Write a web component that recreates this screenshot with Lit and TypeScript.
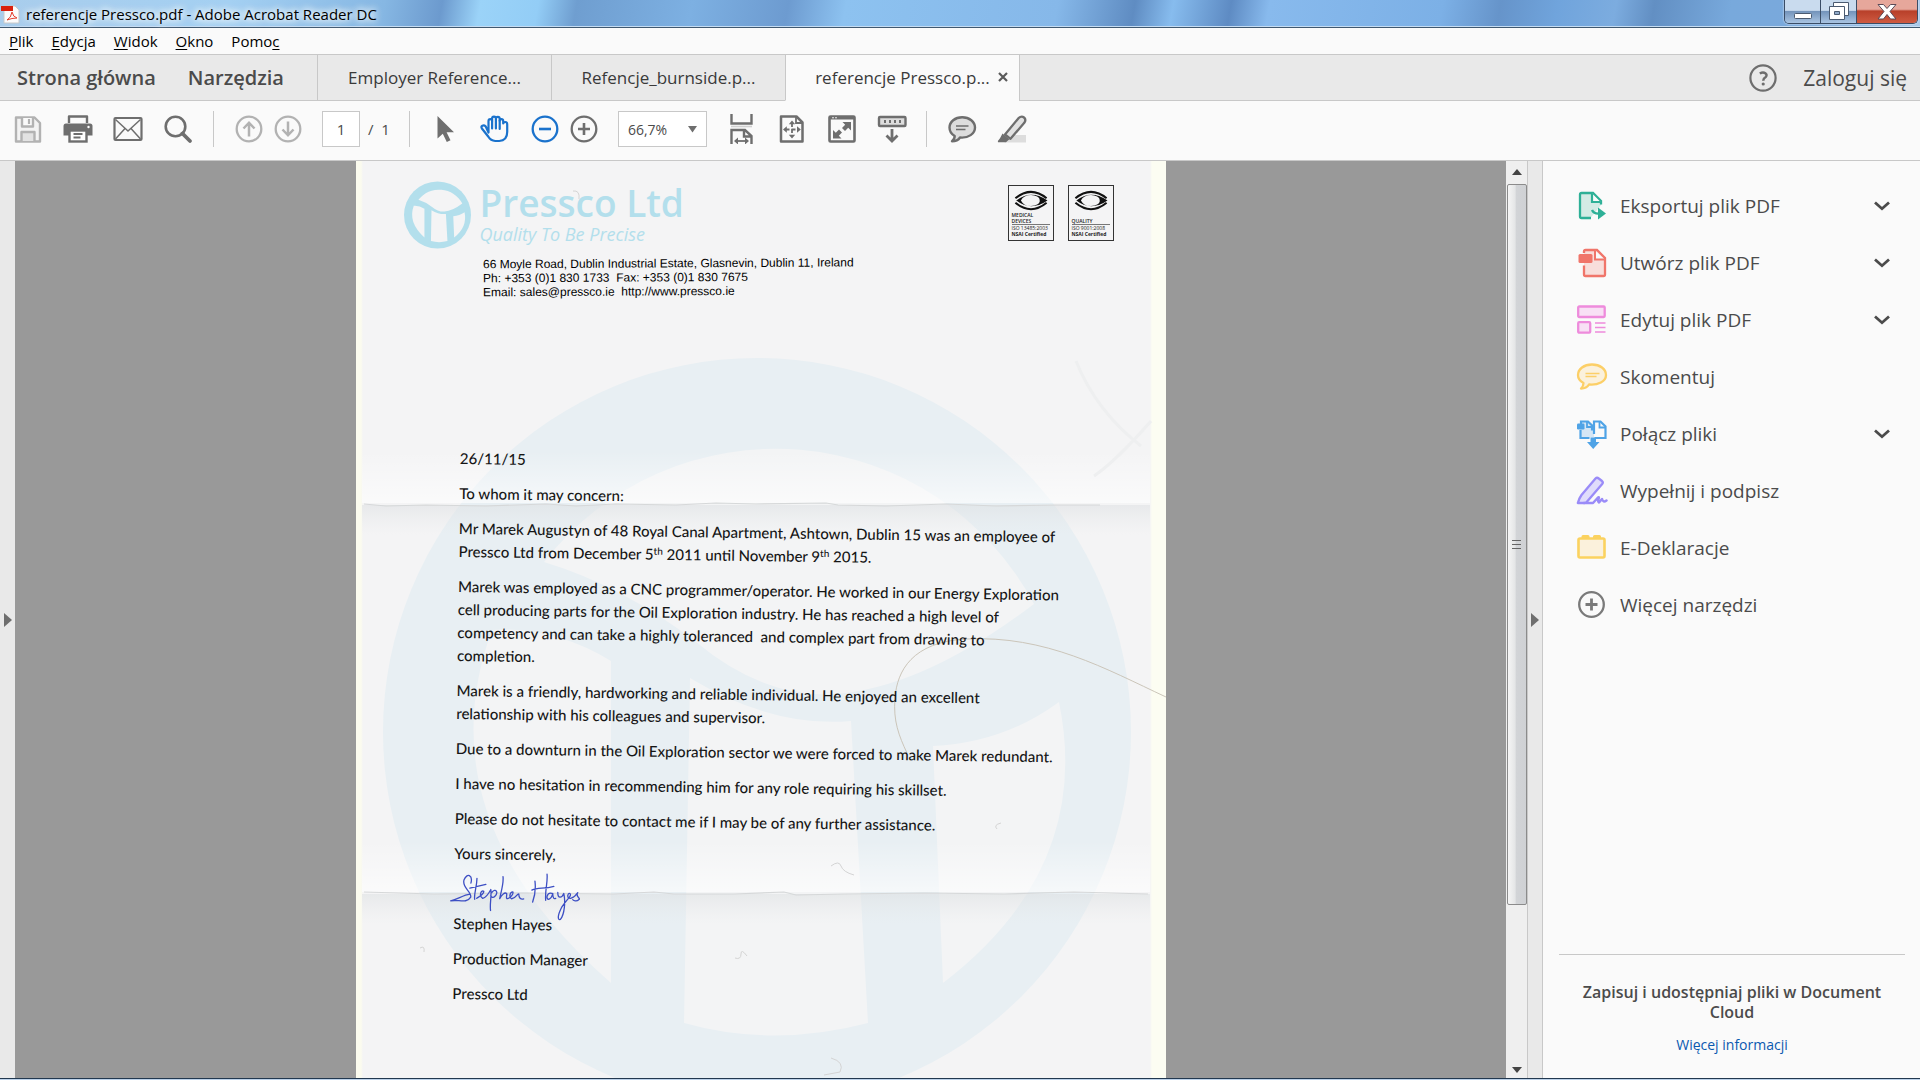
import { LitElement, html, css, svg, nothing } from "lit";
import { customElement } from "lit/decorators.js";

const reset = css`
  *, *::before, *::after { box-sizing: border-box; }
  button { font: inherit; color: inherit; background: none; border: 0; padding: 0; margin: 0; cursor: pointer; }
  a { color: inherit; text-decoration: none; }
  p, h1, h2, ul { margin: 0; padding: 0; }
  ul { list-style: none; }
  svg { display: block; }
`;

const UI_FONT = css`"Open Sans", "Noto Sans", sans-serif`;

/* ---------- toolbar icons, 30 x 30 ---------- */
const icon = (body: unknown) => html`<svg width="30" height="30" viewBox="0 0 30 30" fill="none" aria-hidden="true">${body}</svg>`;

const G = "#6e6e6e";
const L = "#b2b2b2";
const icons = {
  save: icon(svg`<g stroke=${L} stroke-width="2.4" stroke-linejoin="round"><path d="M3 3.5h18.5l5.500 5.500v18.500h-24z" fill="#f3f3f3"/><path d="M9 4v8.500h11v-8.500" fill="#fafafa"/><path d="M8.500 27v-9h13v9" fill="#e2e2e2"/></g><path d="M16 5v5" stroke=${L} stroke-width="2.200"/>`),
  print: icon(svg`<path d="M6 9v-6.500h18v6.500" fill="#fafafa" stroke=${G} stroke-width="2.400" stroke-linejoin="round"/><path d="M3 9.500h24q2.500 0 2.500 2.500v9.500h-29v-9.500q0-2.500 2.500-2.500z" fill=${G}/><rect x="6.500" y="16.500" width="17" height="11" fill="#fff" stroke=${G} stroke-width="2.400"/><path d="M10.500 20h9M10.500 23.500h7" stroke=${G} stroke-width="1.800"/><circle cx="25.500" cy="13" r="1.200" fill="#fff"/>`),
  mail: icon(svg`<rect x="1.500" y="4" width="27" height="22" rx="1" fill="#fafafa" stroke=${G} stroke-width="2.200"/><path d="M2.500 5.500l12.500 11.500 12.500-11.500M2.500 25l9.500-10.500M27.500 25l-9.500-10.500" stroke=${G} stroke-width="1.500"/>`),
  find: icon(svg`<circle cx="12.500" cy="12.500" r="9.800" stroke=${G} stroke-width="2.600"/><path d="M19.500 19.500l7.500 7.500" stroke=${G} stroke-width="3.800" stroke-linecap="round"/>`),
  up: icon(svg`<circle cx="15" cy="15" r="12.300" stroke=${L} stroke-width="2.300"/><path d="M15 22.500v-13M9.500 14.500l5.500-5.800 5.500 5.800" stroke=${L} stroke-width="2.500"/>`),
  down: icon(svg`<circle cx="15" cy="15" r="12.300" stroke=${L} stroke-width="2.300"/><path d="M15 7.500v13M9.500 15.500l5.500 5.800 5.500-5.800" stroke=${L} stroke-width="2.500"/>`),
  pointer: icon(svg`<path d="M7.500 2v22.500l5.300-4.700 4 8.200 3.700-1.800-3.900-8h7.400z" fill=${G}/>`),
  hand: icon(svg`<g stroke="#1a72cc" stroke-width="2.200" stroke-linecap="round" stroke-linejoin="round"><path d="M8.500 18.500v-11.500q0-1.800 1.800-1.800t1.800 1.800v-2.500q0-1.800 1.900-1.800t1.900 1.800q0-1.600 1.900-1.600t1.900 1.800v2q0-1.500 1.700-1.500t1.800 1.800v2.500q.4-1.500 2.200-1.500t1.800 2.500v7.500q0 8.500-8 9h-4q-4.500-.3-6.800-4.200l-6.500-8.300q-1.200-2 .5-2.800t3.200.6z" fill="#fafafa"/><path d="M12.100 7v7.500M15.900 5v9.500M19.700 6.500v8.500"/></g>`),
  minus: icon(svg`<circle cx="15" cy="15" r="12.300" stroke="#1a72cc" stroke-width="2.300"/><path d="M9 15h12" stroke="#1a72cc" stroke-width="2.600"/>`),
  plus: icon(svg`<circle cx="15" cy="15" r="12.300" stroke=${G} stroke-width="2.300"/><path d="M9 15h12M15 9v12" stroke=${G} stroke-width="2.600"/>`),
  fitWidth: icon(svg`<path d="M4.500 0v9.500h20v-9.500" stroke=${G} stroke-width="2.400"/><path d="M4 12.500h21" stroke="#d0d0d0" stroke-width="1.600"/><path d="M4.500 30v-14h13.500l6.500 6v8M17 16v6.500h7" stroke=${G} stroke-width="2.400"/><path d="M9 27h11" stroke=${G} stroke-width="1.800"/><path d="M7 27l4-3.500v7zM22 27l-4-3.500v7z" fill=${G}/>`),
  fitPage: icon(svg`<path d="M4 2.500h15.500l6 6v19h-21.500z" stroke=${G} stroke-width="2.500" stroke-linejoin="round"/><path d="M19 2v7h7" stroke=${G} stroke-width="1.800"/><path d="M15 9v12.500M8.500 15.500h12.500" stroke=${G} stroke-width="1.800" stroke-dasharray="4 2"/><path d="M15 6.500l3.200 3.800h-6.400zM15 24.500l3.200-3.800h-6.400zM6 15.500l3.800-3.200v6.400zM23.800 15.500l-3.800-3.200v6.400z" fill=${G}/>`),
  full: icon(svg`<rect x="2.500" y="2.500" width="25" height="25" rx="1" stroke=${G} stroke-width="2.600"/><path d="M2.500 4h25" stroke=${G} stroke-width="3"/><circle cx="6" cy="3.800" r=".8" fill="#fff"/><circle cx="9" cy="3.800" r=".8" fill="#fff"/><path d="M24 8v8.500l-2.800-2.800-3.200 3.200-3-3 3.200-3.200-2.700-2.700zM6 24.500v-8.500l2.800 2.800 3.200-3.200 3 3-3.200 3.200 2.700 2.700z" fill=${G}/>`),
  strip: icon(svg`<rect x="2" y="3" width="26.500" height="9" rx="1" fill="#ddd" stroke=${G} stroke-width="2.400"/><path d="M7 7.500h17" stroke=${G} stroke-width="3" stroke-dasharray="2 3"/><path d="M15 15v11.500M9.500 21.500l5.500 5.500 5.500-5.500" stroke=${G} stroke-width="2.800"/>`),
  comment: icon(svg`<path d="M15.200 3.200c-7.200 0-12.700 4.600-12.700 10.300 0 4 2.300 6.800 5.200 8.500 0 2.500-1 4-2.700 5.300 3.800 0 6.400-1.300 8-3.800 8.500.8 15-3.800 15-10 0-5.700-5.600-10.300-12.800-10.300z" fill="#ddd" stroke=${G} stroke-width="2.400" stroke-linejoin="round"/><path d="M9 12h12.500M9 15.500h9.500" stroke=${G} stroke-width="1.500"/>`),
  marker: icon(svg`<path d="M14 21h15v7.500h-21.500z" fill="#ddd"/><path d="M8 20.500l13.500-16.300q3-2.700 5.500-.7t.3 5.300l-13.800 16z" fill="#e2e2e2" stroke=${G} stroke-width="2.300" stroke-linejoin="round"/><path d="M5.500 19.500l6.800 5.700-3.300 3h-8q-.5-1.500 2-4z" fill=${G}/>`),
};

const tool = (name: keyof typeof icons, label: string) => html`<button class="tool" aria-label=${label} title=${label}>${icons[name]}</button>`;

/* ---------- side panel ---------- */
const pic = (body: unknown) => html`<svg width="32" height="32" viewBox="0 0 32 32" fill="none" aria-hidden="true">${body}</svg>`;
const panelItems: { label: string; art: unknown; more: boolean }[] = [
  { label: "Eksportuj plik PDF", more: true, art: pic(svg`<path d="M14.500 28h-10.500v-25h13l8 8v4" fill="#d3ebe5"/><path d="M15 28h-9.500q-1.500 0-1.500-1.500v-22q0-1.500 1.500-1.500h11.500l8 8v3.500" stroke="#2eb097" stroke-width="2.300"/><path d="M16 3.500v8.500h8.500" fill="#fafafa" stroke="#2eb097" stroke-width="2.200"/><path d="M16 20q2 4 7 3.600" stroke="#2eb097" stroke-width="2.400"/><path d="M22 17.500l8 6-8 6z" fill="#2eb097"/>`) },
  { label: "Utwórz plik PDF", more: true, art: pic(svg`<path d="M8 6v-1.500q0-1.500 1.500-1.500h11.500l8 8v16.500q0 1.500-1.500 1.500h-18q-1.500 0-1.500-1.500v-9" fill="#f8dedb"/><path d="M8 6v-1.500q0-1.500 1.500-1.500h11.500l8 8v16.500q0 1.500-1.500 1.500h-18q-1.500 0-1.500-1.500v-9" stroke="#f0756a" stroke-width="2.300"/><path d="M19 3.500v9h9.500" fill="#fafafa" stroke="#f0756a" stroke-width="2"/><rect x="2.500" y="7" width="14" height="9" rx="1.500" fill="#f0756a"/>`) },
  { label: "Edytuj plik PDF", more: true, art: pic(svg`<g fill="#f8e0f5" stroke="#ee8bdc" stroke-width="2.300"><rect x="2.200" y="2.500" width="26.500" height="10.500" rx="1"/><rect x="2.200" y="18.200" width="12" height="10.500" rx="1"/></g><path d="M19 19h10.500M19 23.500h10.500M19 28h10.500" stroke="#ee8bdc" stroke-width="1.500"/>`) },
  { label: "Skomentuj", more: false, art: pic(svg`<path d="M16 3.500c-8 0-14 4.500-14 10.500 0 4 2.500 6.500 5.500 8 0 2.500-.8 4-2.500 5.500 4 0 6.500-1.500 8-4 9 .8 17-3 17-9.500 0-6-6-10.500-14-10.500z" fill="#fbf1dc" stroke="#fccf67" stroke-width="2.300" stroke-linejoin="round"/><path d="M9.500 12.500h14M9.500 15.500h11" stroke="#fccf67" stroke-width="1.400"/>`) },
  { label: "Połącz pliki", more: true, art: pic(svg`<path d="M5 8v-4.500h7.500l5.500 4v12h-14v-8" fill="#d5e6f5"/><g stroke="#4fa3e6" stroke-width="2.200"><path d="M4.500 12v8h9M18.500 20h11v-11.500l-5-5h-6.500v12.500M5 6v-2.500h7l4 4v5"/><path d="M11 4v5h5M23.500 4v5.500h6" stroke-width="1.800"/></g><rect x="1" y="5.500" width="7.500" height="6" rx="1.200" fill="#4fa3e6"/><path d="M14.500 19.500h5.500v4.500h3.500l-6.300 7-6.200-7h3.500z" fill="#4fa3e6"/>`) },
  { label: "Wypełnij i podpisz", more: false, art: pic(svg`<path d="M1.800 28q1.500-5 3.700-8l14-16.500q1.500-1.500 3.300 0l3.200 2.500q1.500 1.400.2 3l-15.500 18q-1 1-2.500 1z" fill="#e0dcfb" stroke="#9a8bf8" stroke-width="2.300" stroke-linejoin="round"/><path d="M8 28h9l5-5.500q1.500-1 .5 1.500t.5 3.500l3-3.500q1 4 4.500 1.500" stroke="#9a8bf8" stroke-width="2.500" stroke-linecap="round" stroke-linejoin="round"/>`) },
  { label: "E-Deklaracje", more: false, art: pic(svg`<rect x="2.500" y="6.500" width="26" height="19" rx="1.500" fill="#fbf1dc" stroke="#fbd25f" stroke-width="2.600"/><path d="M5.500 6v-1.500q0-1.500 1.500-1.500h5q1.500 0 1.500 1.500v1.500zM17 6v-1.500q0-1.500 1.500-1.500h5q1.500 0 1.500 1.500v1.500z" fill="#fbd25f"/>`) },
  { label: "Więcej narzędzi", more: false, art: pic(svg`<circle cx="15.500" cy="15.500" r="12.300" stroke="#7a7a7a" stroke-width="2.300"/><path d="M9.500 15.500h12M15.500 9.500v12" stroke="#7a7a7a" stroke-width="2.800"/>`) },
];

@customElement("tools-panel")
export class ToolsPanel extends LitElement {
  static styles = [reset, css`
    :host { display: flex; flex-direction: column; background: #fafafa; border-left: 1px solid #c8c8c8; font-family: ${UI_FONT}; color: #4b4b4b; padding: 16px 15px 0 16px; }
    .list { flex: 1; }
    .item { display: flex; align-items: center; width: 100%; height: 57px; padding: 0 15px 0 17px; gap: 12px; text-align: left; font-size: 19px; }
    .label { flex: 1; }
    .foot { border-top: 1px solid #c8c8c8; padding: 27px 16px 23px; text-align: center; }
    .foot h2 { font-size: 16px; line-height: 20px; font-weight: 600; }
    .link { display: block; margin-top: 13px; font-size: 14px; line-height: 20px; color: #0b59b0; }
  `];
  render() {
    return html`
      <ul class="list">
        ${panelItems.map((i) => html`<li><button class="item">${i.art}<span class="label">${i.label}</span>
          ${i.more ? html`<svg width="16" height="10" viewBox="0 0 16 10" fill="none" aria-hidden="true"><path d="M1 1.500l7 6.200 7-6.200" stroke="#4b4b4b" stroke-width="2.800"/></svg>` : nothing}</button></li>`)}
      </ul>
      <section class="foot">
        <h2>Zapisuj i udostępniaj pliki w Document Cloud</h2>
        <a class="link" href="#more">Więcej informacji</a>
      </section>`;
  }
}

/* ---------- the letter ---------- */
/* Company mark on a 748-unit circle: ring with a draped band and two legs. */
const mark = (ink: string, paper: string) => svg`
  <circle cx="374" cy="374" r="374" fill=${ink}/>
  <g fill=${paper}>
    <path d="M161 204A293 293 0 0 1 651 246Q540 330 452 336Q380 340 313 284Q240 228 161 204Z"/>
    <path d="M109 272Q170 268 228 303V625Q40 460 109 272Z"/>
    <path d="M307 320Q390 370 468 363L485 665Q390 690 301 665Z"/>
    <path d="M550 388Q620 385 676 344Q710 510 560 625Z"/>
  </g>`;

const eye = svg`<path d="M3 9Q20-5 37 9M3 14Q20 28 37 14" fill="none" stroke="#111" stroke-width="2.200"/><path d="M4 11.500Q20-1 38 11.500Q20 24 4 11.500ZM9 11.500Q12 17.500 20 17.500Q28 17 31 11.500Q28 6 20 5.500Q12 5.500 9 11.500Z" fill="#111" fill-rule="evenodd"/><path d="M28 6l6 5.500-6 5.500q3-5.500 0-11z" fill="#111"/>`;

@customElement("scanned-letter")
export class ScannedLetter extends LitElement {
  static styles = [reset, css`
    :host { display: block; position: relative; overflow: hidden; width: 100%; max-width: 810px; color: #161616;
      background: linear-gradient(90deg, #fbfbee 0 5px, #f4f4f5 7px calc(100% - 16px), #fcfdf2 calc(100% - 14px)); }
    .paper { position: absolute; top: 0; left: 0; width: 810px; height: 918px; }
    .content { position: relative; }
    .head { display: flex; align-items: flex-start; padding: 20px 52px 0 48px; }
    .logo { margin-right: 9px; }
    .brand { flex: 1; color: #b3dfec; font-family: "Open Sans", "Noto Sans", sans-serif; }
    .brand h1 { font-size: 37px; line-height: 43px; font-weight: 600; }
    .brand p { font-size: 18px; line-height: 20px; font-weight: 500; font-style: italic; }
    .certs { display: flex; gap: 14px; padding-top: 4px; }
    .cert { width: 46px; height: 56px; border: 1px solid #333; padding: 4px 3px 2px; display: flex; flex-direction: column; font-family: "Open Sans", sans-serif; font-size: 5px; line-height: 6px; color: #222; }
    .cert .name { flex: 1; display: flex; align-items: flex-end; border-bottom: 1px solid #777; font-weight: 600; }
    .cert .by { font-weight: 700; line-height: 7px; }
    .address { padding: 9px 0 0 127px; font-family: "Liberation Sans", Arial, sans-serif; font-size: 12px; line-height: 14px; font-style: normal; color: #000; transform: rotate(-0.3deg); transform-origin: left; white-space: pre-line; }
    .body { margin-top: 147px; padding: 0 0 40px 104px; display: flex; flex-direction: column; gap: 12px; font-family: Lato, "Open Sans", sans-serif; font-size: 15px; line-height: 23px; font-weight: 500; transform: rotate(0.8deg); transform-origin: 104px 0; white-space: pre; }
    .body sup { font-size: 10px; line-height: 10px; vertical-align: 5px; }
    .sign { height: 23px; }
    .sign svg { overflow: visible; }
  `];
  render() {
    return html`
      <svg class="paper" viewBox="0 0 810 918" fill="none" aria-hidden="true">
        <defs>
          <linearGradient id="lift" x1="0" y1="1" x2="0" y2="0"><stop offset="0" stop-color="#fff" stop-opacity=".6"/><stop offset="1" stop-color="#fff" stop-opacity="0"/></linearGradient>
          <linearGradient id="dip" x1="0" y1="0" x2="0" y2="1"><stop offset="0" stop-color="#dde0e2" stop-opacity=".55"/><stop offset="1" stop-color="#e6e8ea" stop-opacity="0"/></linearGradient>
        </defs>
        <g transform="translate(27 197)">${mark("#e8eff3", "#f3f4f5")}</g>
        <g>
          <path d="M6 290h788v52h-788z" fill="url(#lift)"/><path d="M6 344h788v30h-788z" fill="url(#dip)"/>
          <path d="M6 680h788v51h-788z" fill="url(#lift)"/><path d="M6 733h788v30h-788z" fill="url(#dip)"/>
          <path d="M8 343l22 2 40-1 60 1 60-2 30 2 40-2 60 1 40-2 40 1 70-1 12 2 48 1 60-2 50 2 60-1 44 0" stroke="#d6d8d9" stroke-width="1.200"/>
          <path d="M8 731l70 2 90-1 90 1 40-2 20 2 60 0 50-2 12 3 48-1 80-1 80 1 70-2 74 2" stroke="#d6d8d9" stroke-width="1.200"/>
          <path d="M795 260Q760 300 738 315M720 200Q740 250 785 285" stroke="#eeeff0" stroke-width="3"/>
        </g>
        <path d="M551 592C543 575 537 560 539 537C541 510 556 481 610 478C690 474 750 508 810 536" stroke="#cbc5b9" stroke-width="1"/>
        <path d="M475 705q8-6 10 0t13 9M379 797q6 2 6-4t6 2M475 897q14 4 9 14l-16 3M64 787q5-3 4 4M645 662q-8 2-4 6M217 30q7-1 6 8" stroke="#d4d4d4" stroke-width="1"/>
      </svg>
      <div class="content">
        <header class="head">
          <svg class="logo" width="67" height="68" viewBox="0 0 748 748" role="img" aria-label="Pressco">${mark("#b3dfec", "#f4f4f5")}</svg>
          <div class="brand"><h1>Pressco Ltd</h1><p>Quality To Be Precise</p></div>
          <div class="certs">
            <div class="cert"><svg width="38" height="22" viewBox="0 0 40 24" aria-hidden="true">${eye}</svg><span class="name">MEDICAL<br>DEVICES</span><span>ISO 13485:2003</span><span class="by">NSAI Certified</span></div>
            <div class="cert"><svg width="38" height="22" viewBox="0 0 40 24" aria-hidden="true">${eye}</svg><span class="name">QUALITY</span><span>ISO 9001:2008</span><span class="by">NSAI Certified</span></div>
          </div>
        </header>
        <address class="address">66 Moyle Road, Dublin Industrial Estate, Glasnevin, Dublin 11, Ireland
Ph: +353 (0)1 830 1733 &nbsp;Fax: +353 (0)1 830 7675
Email: sales@pressco.ie &nbsp;http://www.pressco.ie</address>
        <article class="body"><p>26/11/15</p><p>To whom it may concern:</p><p>Mr Marek Augustyn of 48 Royal Canal Apartment, Ashtown, Dublin 15 was an employee of
Pressco Ltd from December 5<sup>th</sup> 2011 until November 9<sup>th</sup> 2015.</p><p>Marek was employed as a CNC programmer/operator. He worked in our Energy Exploration
cell producing parts for the Oil Exploration industry. He has reached a high level of
competency and can take a highly toleranced  and complex part from drawing to
completion.</p><p>Marek is a friendly, hardworking and reliable individual. He enjoyed an excellent
relationship with his colleagues and supervisor.</p><p>Due to a downturn in the Oil Exploration sector we were forced to make Marek redundant.</p><p>I have no hesitation in recommending him for any role requiring his skillset.</p><p>Please do not hesitate to contact me if I may be of any further assistance.</p><p>Yours sincerely,</p><div class="sign">${this.signature()}</div><p>Stephen Hayes</p><p>Production Manager</p><p>Pressco Ltd</p></article>
      </div>`;
  }
  signature() {
    return html`<svg width="132" height="23" viewBox="4 8 132 23" fill="none" role="img" aria-label="Stephen Hayes">
      <path d="M21 14C23 6 17 3 14 11C12 19 22 22 21 28C17 35 8 30 1 32C8 30 14 26 20 25M27 9C27 18 24 24 25 30M20 19L36 15M27 29C30 27 34 25 34 22C31 20 29 27 33 29C37 28 40 22 41 20C42 27 40 34 41 41M42 23C46 18 49 23 45 27C43 29 41 27 41 26M53 7C54 14 51 23 50 29C52 25 55 22 57 24C57 27 56 29 58 29C61 28 64 24 63 22C60 22 59 28 62 29C66 29 67 24 69 24C69 28 71 30 74 29M85 11C86 18 85 26 83 32M97 4C98 12 95 20 96 30M82 20C88 17 94 19 104 16M102 23C97 22 96 29 99 29C102 28 103 23 103 23C103 27 104 29 106 28M108 22C108 28 112 28 114 23C116 31 115 44 111 49C108 50 108 45 112 37C115 32 118 29 120 26C122 23 119 21 118 25C118 30 124 28 128 22C125 26 132 28 129 29C127 31 124 30 123 29" stroke="#3d4fc4" stroke-width="1.300" stroke-linecap="round" stroke-linejoin="round"/>
    </svg>`;
  }
}

@customElement("app-root")
export class AppRoot extends LitElement {
  static styles = [reset, css`
    :host { display: grid; grid-template-rows: auto auto auto auto minmax(0, 1fr) auto; height: 100vh; overflow: hidden; background: #fafafa; font-family: ${UI_FONT}; color: #4b4b4b; }
    .title { display: flex; align-items: flex-start; height: 28px; padding: 0 2px 0 1px; border-bottom: 1px solid #40586f; box-shadow: inset 0 -1px #c5dcf2;
      background: linear-gradient(100deg, #a9cdec 0, #a4d0f2 12%, #86b7e3 20%, #6c9ace 23%, #9bd3f8 25%, #93cdf6 28%, #6f9ed0 30%, #7db0e2 36%, #6d9bd0 41%, #8dc2f0 44%, #86b8e9 55%, #5f8cc2 59%, #87bcee 61%, #5e8bc3 64%, #88baed 66%, #7cb0e6 75%, #6694ca 78%, #70a4dc 81%, #7cacdf 84%, #628fc3 86%, #78a9dc 90%, #7aa9dc 94%, #a9c9ea 100%); }
    .title .app { margin-top: 5px; }
    .title h1 { flex: 1; margin: 0 0 0 6px; font-size: 15px; line-height: 28px; font-weight: 400; color: #000; text-shadow: 0 0 6px #fff, 0 0 8px #fff, 0 0 10px #e8f4ff; }
    .wins { display: flex; height: 24px; border: 1px solid #3a4d66; border-top: 0; border-radius: 0 0 5px 5px; overflow: hidden; box-shadow: 0 0 2px #fff; }
    .win { width: 36px; display: flex; align-items: center; justify-content: center; border-right: 1px solid #3a4d66; background: linear-gradient(#c9dbee 0 45%, #7494bb 50%, #a9c4e2); }
    .win.close { width: 60px; border: 0; background: linear-gradient(#e6a79b 0 40%, #b8402a 48%, #cf5a41); }
    .menu { display: flex; gap: 18px; height: 26px; padding-left: 9px; font-size: 15px; color: #000; }
    .menu u { text-underline-offset: 2px; }
    .tabs { display: flex; height: 47px; border-top: 1px solid #c8c8c8; background: #e9e9e9; }
    .home { display: flex; gap: 32px; width: 317px; padding: 0 0 0 17px; border-bottom: 1px solid #c8c8c8; font-size: 20px; font-weight: 600; }
    .tab { width: 234px; display: flex; align-items: center; justify-content: center; border: 0 solid #c8c8c8; border-width: 0 0 1px 1px; font-size: 17px; color: #3a3a3a; position: relative; }
    .tab.on { background: #fafafa; border-bottom-color: #fafafa; }
    .x { position: absolute; right: 11px; top: 17px; }
    .rest { flex: 1; display: flex; align-items: center; justify-content: flex-end; gap: 26px; padding-right: 13px; border: 0 solid #c8c8c8; border-width: 0 0 1px 1px; font-size: 21px; font-weight: 500; }
    .bar { display: flex; align-items: center; gap: 20px; height: 60px; padding: 0 13px 3px; border-bottom: 1px solid #c8c8c8; }
    .tool { width: 30px; height: 30px; flex: none; }
    .sep { width: 1px; height: 36px; background: #c8c8c8; }
    .pair { display: flex; align-items: center; gap: 9px; }
    .pages { display: flex; align-items: center; gap: 8px; font-size: 15px; margin: 0 -1px; }
    .pages input { width: 38px; height: 36px; border: 1px solid #c8c8c8; background: #fff; text-align: center; font: inherit; color: inherit; padding: 0; }
    .zoom { position: relative; margin-left: -1px; }
    .zoom select { display: block; appearance: none; width: 89px; height: 36px; border: 1px solid #c8c8c8; border-radius: 0; background: #fff; padding: 0 0 0 9px; font: inherit; font-size: 14px; color: inherit; }
    .zoom svg { position: absolute; right: 10px; top: 15px; pointer-events: none; }
    .views { display: flex; align-items: center; gap: 20px; margin-right: -1px; }
    .work { display: grid; grid-template-columns: 15px minmax(0, 1fr) 21px 15px 378px; min-height: 0; }
    .rail { display: flex; align-items: center; justify-content: center; background: #e9e9e9; }
    .rail.right { border-left: 1px solid #c8c8c8; }
    .canvas { display: flex; justify-content: center; background: #999; overflow: hidden; }
    .scroll { display: flex; flex-direction: column; align-items: center; background: #efefef; padding: 8px 1px 5px; }
    .thumb { flex: 1; width: 20px; margin: 9px 0 162px; display: flex; align-items: center; justify-content: center; border: 1px solid #8b8b8b; border-radius: 2px; background: linear-gradient(90deg, #f5f5f5, #e4e5e6 40%, #d2d4d7 45%, #cfd1d4); }
    .edge { height: 2px; background: #bcd2ea; border-top: 1px solid #22384f; }
  `];
  render() {
    const menu = [["", "P", "lik"], ["", "E", "dycja"], ["", "W", "idok"], ["", "O", "kno"], ["Pomo", "c", ""]];
    return html`
      <header class="title">
        <svg class="app" width="19" height="19" viewBox="0 0 19 19" fill="none" aria-hidden="true"><path d="M3 1h11l4 4v13H3z" fill="#fbfbfb" stroke="#c9c9c9"/><path d="M0 1h12v5H0z" fill="#d9200e"/><path d="M6 15q4-2 5-8q1 5 5 6q-5 0-10 2" stroke="#e4402f"/></svg>
        <h1>referencje Pressco.pdf - Adobe Acrobat Reader DC</h1>
        <div class="wins">
          <button class="win" aria-label="Minimalizuj"><svg width="20" height="20" viewBox="0 0 20 20"><rect x="1.500" y="11.500" width="17" height="5" rx="1" fill="#fff" stroke="#4a5a70"/></svg></button>
          <button class="win" aria-label="Przywróć"><svg width="22" height="20" viewBox="0 0 22 20" fill="#fff" stroke="#4a5a70"><path d="M5.500.5h15v13h-15z"/><path d="M1.500 4.500h15v13h-15z"/><path d="M6.500 9.500h5v3h-5z" fill="#8fa9c8"/></svg></button>
          <button class="win close" aria-label="Zamknij"><svg width="20" height="18" viewBox="0 0 20 18"><path d="M1 1.500h5.500l3.500 4 3.500-4h5.500l-6 7 6 7.500h-5.500l-3.500-4.500-3.500 4.500h-5.500l6-7.500z" fill="#fff" stroke="#5b4a56"/></svg></button>
        </div>
      </header>
      <nav class="menu">${menu.map(([a, b, c]) => html`<button>${a}<u>${b}</u>${c}</button>`)}</nav>
      <nav class="tabs">
        <div class="home"><button>Strona główna</button><button>Narzędzia</button></div>
        <button class="tab">Employer Reference...</button>
        <button class="tab">Refencje_burnside.p...</button>
        <button class="tab on">referencje Pressco.p...<svg class="x" width="10" height="10" viewBox="0 0 10 10" aria-hidden="true"><path d="M1 1l8 8M9 1l-8 8" stroke="#5a5a5a" stroke-width="2.200"/></svg></button>
        <div class="rest">
          <button aria-label="Pomoc"><svg width="28" height="28" viewBox="0 0 28 28" fill="none"><circle cx="14" cy="14" r="12.600" stroke=${G} stroke-width="2.200"/><path d="M10.800 9.500q3.200-2 5.500-.3t.4 3.800q-2.500 1.500-2.500 3.700" stroke=${G} stroke-width="2.500"/><circle cx="14.200" cy="20" r="1.600" fill=${G}/></svg></button>
          <button>Zaloguj się</button>
        </div>
      </nav>
      <div class="bar" role="toolbar">
        ${tool("save", "Zapisz")}${tool("print", "Drukuj")}${tool("mail", "Wyślij")}${tool("find", "Znajdź")}
        <span class="sep"></span>
        <div class="pair">${tool("up", "Poprzednia strona")}${tool("down", "Następna strona")}</div>
        <label class="pages"><input type="text" value="1" aria-label="Numer strony"><span>/&nbsp; 1</span></label>
        <span class="sep"></span>
        ${tool("pointer", "Zaznacz")}${tool("hand", "Rączka")}
        <div class="pair">${tool("minus", "Pomniejsz")}${tool("plus", "Powiększ")}</div>
        <div class="zoom"><select aria-label="Powiększenie"><option>66,7%</option></select><svg width="9" height="7" viewBox="0 0 9 7" aria-hidden="true"><path d="M0 0h9L4.500 6.500z" fill=${G}/></svg></div>
        <div class="views">${tool("fitWidth", "Dopasuj szerokość")}${tool("fitPage", "Dopasuj stronę")}${tool("full", "Pełny ekran")}${tool("strip", "Pasek")}</div>
        <span class="sep"></span>
        ${tool("comment", "Komentarz")}${tool("marker", "Wyróżnij")}
      </div>
      <main class="work">
        <button class="rail" aria-label="Panel nawigacji"><svg width="8" height="14" viewBox="0 0 8 14"><path d="M0 0l8 7-8 7z" fill=${G}/></svg></button>
        <section class="canvas"><scanned-letter></scanned-letter></section>
        <div class="scroll" aria-hidden="true">
          <svg width="10" height="6" viewBox="0 0 10 6"><path d="M0 6l5-6 5 6z" fill="#444"/></svg>
          <div class="thumb"><svg width="9" height="11" viewBox="0 0 9 11"><path d="M0 1.500h9M0 5.500h9M0 9.500h9" stroke="#666" stroke-width="1"/></svg></div>
          <svg width="10" height="6" viewBox="0 0 10 6"><path d="M0 0l5 6 5-6z" fill="#444"/></svg>
        </div>
        <button class="rail right" aria-label="Panel narzędzi"><svg width="8" height="14" viewBox="0 0 8 14"><path d="M0 0l8 7-8 7z" fill=${G}/></svg></button>
        <tools-panel></tools-panel>
      </main>
      <footer class="edge"></footer>`;
  }
}
